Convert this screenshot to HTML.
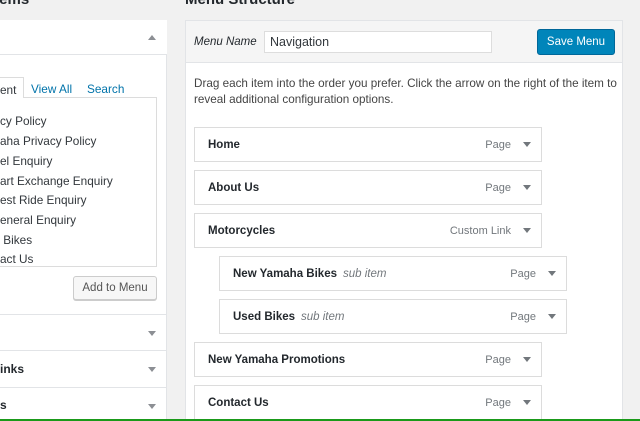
<!DOCTYPE html>
<html><head><style>
*{box-sizing:border-box;margin:0;padding:0}
body{width:640px;height:421px;overflow:hidden;background:#f1f1f1;font-family:"Liberation Sans",sans-serif;color:#23282d;position:relative;font-size:12px}
.a{position:absolute}
.t{font-size:15px;font-weight:bold;color:#23282d}
.item{position:absolute;background:#fff;border:1px solid #dcdcdc;height:35px;font-size:11.5px;font-weight:bold;padding:11px 0 0 13px;width:348px}
.item .r{position:absolute;right:10px;top:11px;font-weight:normal;color:#72777c;font-size:11px}
.item .r b{display:inline-block;margin-left:12px;width:0;height:0;border-left:4px solid transparent;border-right:4px solid transparent;border-top:5px solid #72777c;vertical-align:1px}
.sub{font-style:italic;font-weight:normal;color:#72777c;margin-left:6px}
.tri{position:absolute;width:0;height:0;border-left:4px solid transparent;border-right:4px solid transparent;border-top:5px solid #8c8f94}
.li{position:absolute;left:0;font-size:11.8px;color:#32373c}
</style></head><body>
<div class="a t" style="left:-10px;top:-9px">Items</div>
<div class="a t" style="left:185px;top:-9px">Menu Structure</div>
<div class="a" style="left:0;top:20px;width:167px;height:401px;background:#fff;border:1px solid #e2e4e7;border-left:none"></div>
<div class="a" style="left:0;top:20px;width:167px;height:35px;background:#fff;border-bottom:1px solid #e2e4e7"></div>
<div class="a" style="left:148px;top:35px;width:0;height:0;border-left:4px solid transparent;border-right:4px solid transparent;border-bottom:5px solid #8c8f94"></div>
<div class="a" style="left:-1px;top:77px;width:25px;height:21px;background:#fff;border:1px solid #dcdcdc;border-bottom:none;z-index:2;font-size:11.8px;padding:5px 0 0 0;color:#32373c">ent</div>
<div class="a" style="left:31px;top:82px;font-size:11.8px;color:#0073aa">View All</div>
<div class="a" style="left:87px;top:82px;font-size:11.8px;color:#0073aa">Search</div>
<div class="a" style="left:-1px;top:97px;width:158px;height:170px;border:1px solid #dcdcdc;background:#fff"></div>
<div class="li" style="top:114px">cy Policy</div>
<div class="li" style="top:134px">aha Privacy Policy</div>
<div class="li" style="top:154px">el Enquiry</div>
<div class="li" style="top:174px">art Exchange Enquiry</div>
<div class="li" style="top:193px">est Ride Enquiry</div>
<div class="li" style="top:213px">eneral Enquiry</div>
<div class="li" style="top:233px">&nbsp;Bikes</div>
<div class="li" style="top:252px">act Us</div>
<div class="a" style="left:73px;top:276px;width:84px;height:24px;border:1px solid #ccc;border-radius:3px;background:#f7f7f7;box-shadow:0 1px 0 #ccc;font-size:11.5px;text-align:center;padding-top:5px;color:#555">Add to Menu</div>
<div class="a" style="left:0;top:314px;width:167px;border-top:1px solid #e2e4e7"></div>
<div class="a" style="left:0;top:350px;width:167px;border-top:1px solid #e2e4e7"></div>
<div class="a" style="left:0;top:387px;width:167px;border-top:1px solid #e2e4e7"></div>
<div class="tri" style="left:148px;top:331px"></div>
<div class="tri" style="left:148px;top:367px"></div>
<div class="tri" style="left:148px;top:404px"></div>
<div class="a" style="left:0;top:362px;font-size:12px;font-weight:bold">inks</div>
<div class="a" style="left:0;top:398px;font-size:12px;font-weight:bold">s</div>
<div class="a" style="left:185px;top:20px;width:438px;height:401px;background:#fff;border:1px solid #e2e4e7"></div>
<div class="a" style="left:185px;top:20px;width:438px;height:43px;background:#f5f5f5;border:1px solid #e2e4e7"></div>
<div class="a" style="left:194px;top:36px;font-size:11.5px;font-style:italic;color:#23282d">Menu Name</div>
<div class="a" style="left:264px;top:31px;width:228px;height:22px;background:#fff;border:1px solid #ddd;font-size:12.5px;padding:3px 0 0 5px;color:#32373c">Navigation</div>
<div class="a" style="left:537px;top:29px;width:78px;height:26px;background:#0085ba;border:1px solid #006799;border-radius:3px;color:#fff;font-size:11.5px;text-align:center;padding-top:6px">Save Menu</div>
<div class="a" style="left:194px;top:76px;font-size:11.7px;line-height:16px;color:#444;width:435px">Drag each item into the order you prefer. Click the arrow on the right of the item to reveal additional configuration options.</div>
<div class="item" style="left:194px;top:127px">Home<span class="r">Page<b></b></span></div>
<div class="item" style="left:194px;top:170px">About Us<span class="r">Page<b></b></span></div>
<div class="item" style="left:194px;top:213px">Motorcycles<span class="r">Custom Link<b></b></span></div>
<div class="item" style="left:219px;top:256px">New Yamaha Bikes<span class="sub">sub item</span><span class="r">Page<b></b></span></div>
<div class="item" style="left:219px;top:299px">Used Bikes<span class="sub">sub item</span><span class="r">Page<b></b></span></div>
<div class="item" style="left:194px;top:342px">New Yamaha Promotions<span class="r">Page<b></b></span></div>
<div class="item" style="left:194px;top:385px">Contact Us<span class="r">Page<b></b></span></div>
<div class="a" style="left:0;top:419px;width:640px;height:2px;background:#1a9a1a"></div>
</body></html>
